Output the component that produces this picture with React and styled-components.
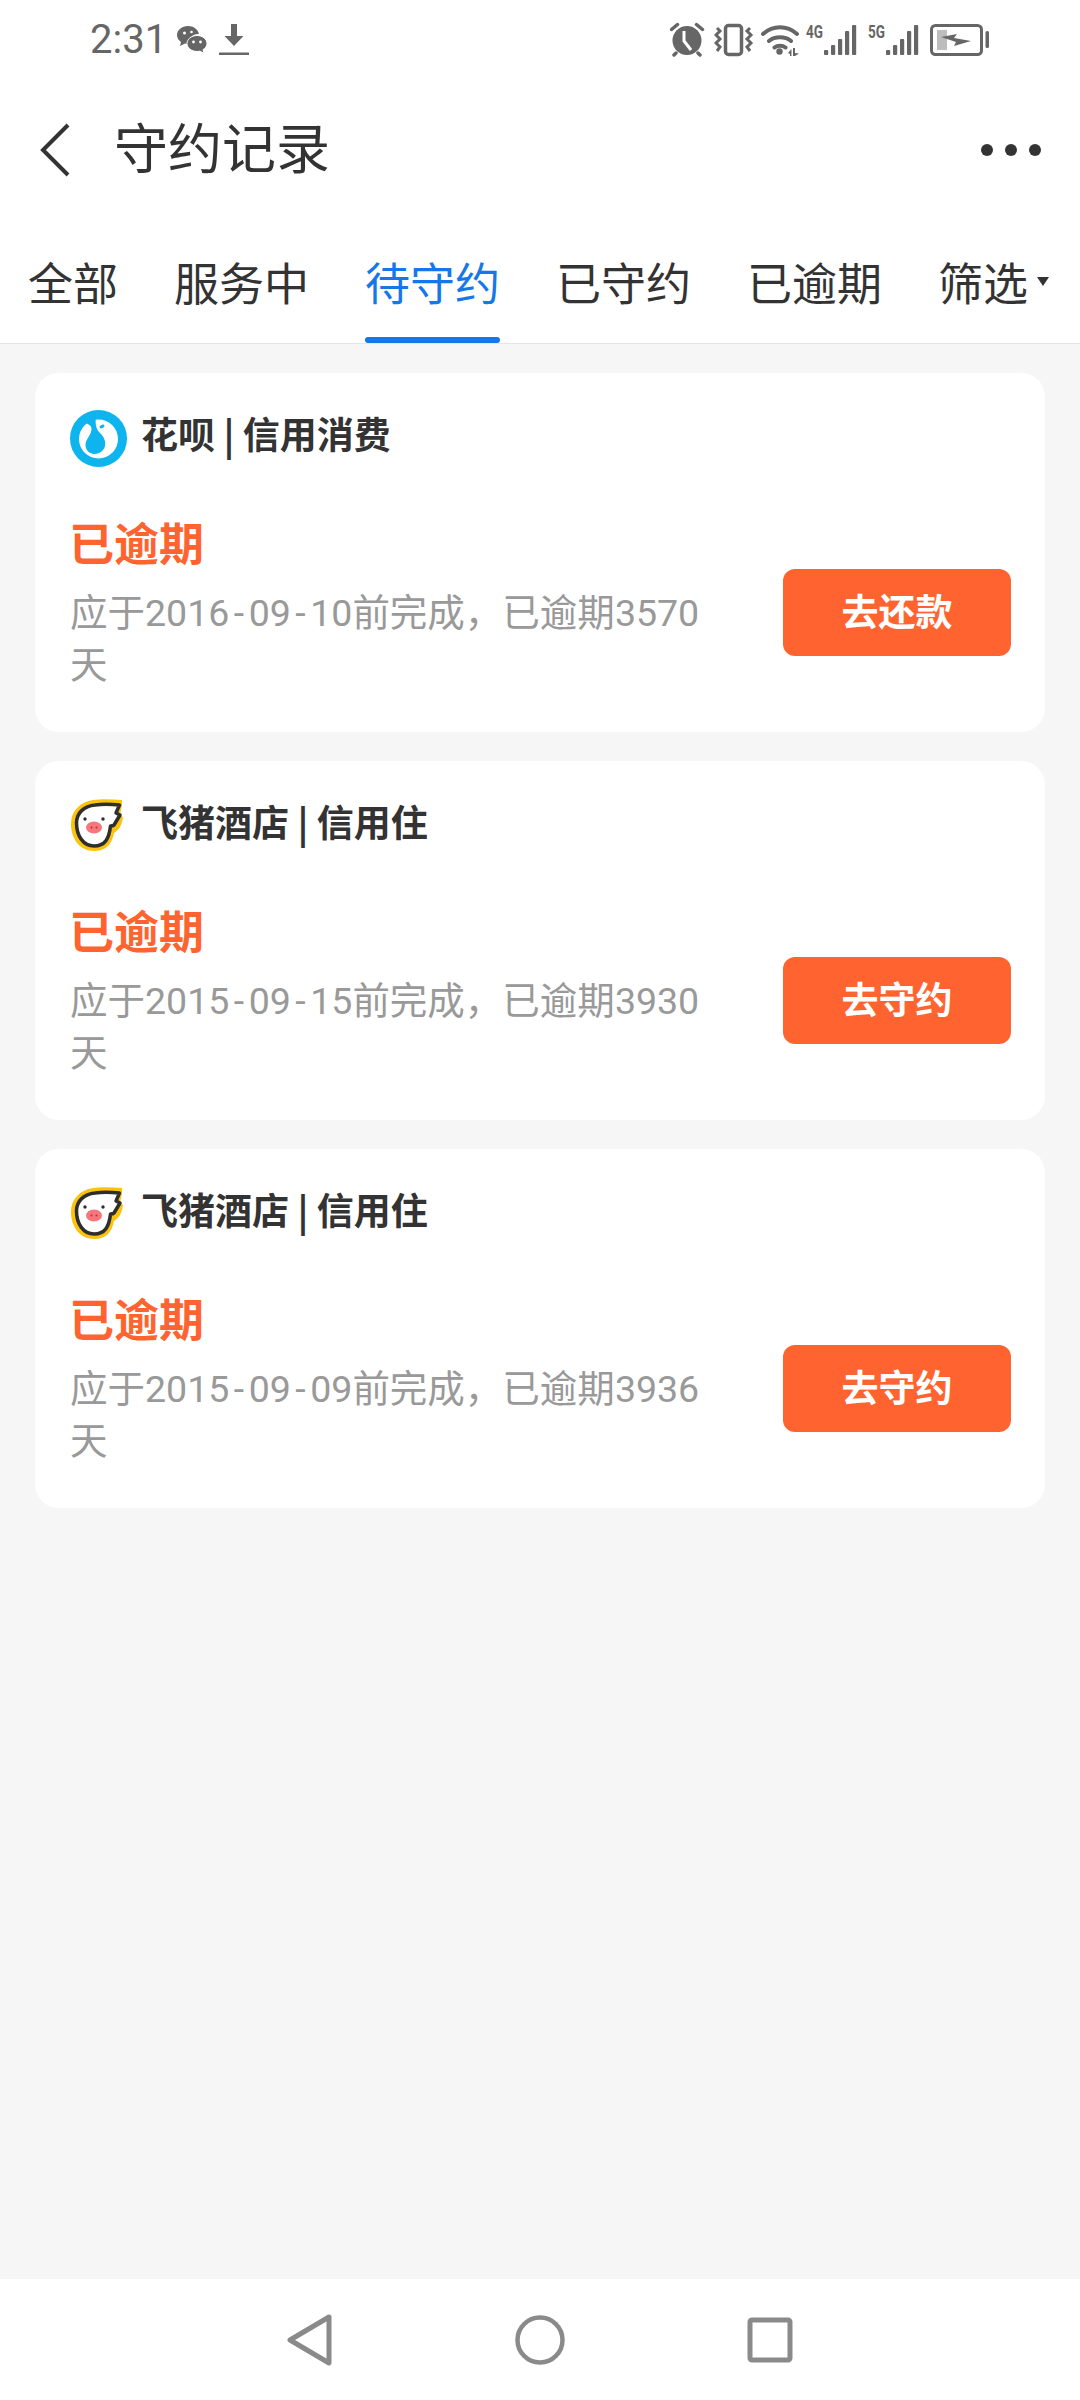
import styled, { createGlobalStyle } from "styled-components";

const GlobalStyle = createGlobalStyle`
  html, body {
    margin: 0;
    padding: 0;
    background: #ffffff;
  }
  * {
    box-sizing: border-box;
  }
`;

const records = [
  { logo: "huabei", name: "花呗 | 信用消费", date: "2016-09-10", days: 3570, action: "去还款" },
  { logo: "fliggy", name: "飞猪酒店 | 信用住", date: "2015-09-15", days: 3930, action: "去守约" },
  { logo: "fliggy", name: "飞猪酒店 | 信用住", date: "2015-09-09", days: 3936, action: "去守约" },
];

const tabs = ["全部", "服务中", "待守约", "已守约", "已逾期"];

function WechatIcon() {
  return (
    <svg width="30" height="28" viewBox="0 0 30 28">
      <path d="M11 0C5 0 0 4 0 9c0 3 1.500 5 4 7l-1 4 5-2.500c1 .3 2 .5 3 .5h1C11.500 12 16 7.500 22 8 21 3.500 16.500 0 11 0z" fill="#666" />
      <path d="M20 9.500c-5.500 0-10 3.700-10 8s4.500 8 10 8c1 0 2-.1 3-.4l4 2.400-1-3.800c2.500-1.500 4-3.700 4-6.200 0-4.300-4.500-8-10-8z" fill="#666" stroke="#fff" strokeWidth="1" />
      <circle cx="7.500" cy="7" r="1.500" fill="#fff" />
      <circle cx="14.500" cy="6" r="1.300" fill="#fff" />
      <circle cx="16.500" cy="16" r="1.400" fill="#fff" />
      <circle cx="23.500" cy="16" r="1.400" fill="#fff" />
    </svg>
  );
}

function DownloadIcon() {
  return (
    <svg width="30" height="32" viewBox="0 0 30 32">
      <path d="M12 0h6v12h6.500L15 22 5.500 12H12z" fill="#666" />
      <rect x="0" y="28.500" width="30" height="2.500" fill="#666" />
    </svg>
  );
}

function AlarmIcon() {
  return (
    <svg width="44" height="40" viewBox="0 0 44 40">
      <circle cx="17" cy="20.500" r="14.500" fill="#666" />
      <path d="M1.500 9.500l6-5M32.500 9.500l-6-5M6 33l-2 2M28 33l2 2" stroke="#666" strokeWidth="3.500" strokeLinecap="round" />
      <path d="M14 11v10l7 9" fill="none" stroke="#fff" strokeWidth="3" />
    </svg>
  );
}

function VibrateIcon() {
  return (
    <svg width="47" height="40" viewBox="0 0 47 40">
      <rect x="11.500" y="5.500" width="16" height="29" rx="3" fill="none" stroke="#666" strokeWidth="3.500" />
      <path d="M3 8l3 3-4 4 4 4-4 4 4 4-3 4M36 8l-3 3 4 4-4 4 4 4-4 4 3 4" fill="none" stroke="#666" strokeWidth="3" />
    </svg>
  );
}

function WifiIcon() {
  return (
    <svg width="45" height="40" viewBox="0 0 45 40">
      <path d="M2 14c10-9 24-9 34 0M8 21c6-5 16-5 22 0M13.500 27.500c3-2.500 8-2.500 11 0" fill="none" stroke="#666" strokeWidth="4" strokeLinecap="round" />
      <circle cx="18.500" cy="31.500" r="3.200" fill="#666" />
      <path d="M27 33l3.500-4v7H29v-2zM32 28h2v5l4 .5-4 2.500h-2z" fill="#666" />
    </svg>
  );
}

function SignalIcon({ label }) {
  const bars = [5, 10, 16, 24, 30];
  return (
    <svg width="62" height="40" viewBox="0 0 62 40">
      <text x="0" y="18" fontFamily="Roboto, sans-serif" fontSize="19" fontWeight="700" fill="#666" textLength="17" lengthAdjust="spacingAndGlyphs">
        {label}
      </text>
      {bars.map((h, i) => (
        <rect key={i} x={18 + i * 7} y={35 - h} width="4.200" height={h} rx="1" fill="#666" />
      ))}
    </svg>
  );
}

function BatteryIcon() {
  return (
    <svg width="60" height="40" viewBox="0 0 60 40">
      <rect x="1.500" y="5.500" width="50" height="29" rx="4" fill="none" stroke="#666" strokeWidth="3" />
      <rect x="7" y="10" width="10" height="20" fill="#bdbdbd" />
      <path d="M11 17l16-3-3 4 17 3-17 5 2-4z" fill="#666" />
      <rect x="55.500" y="11" width="3.500" height="17" rx="1.500" fill="#666" />
    </svg>
  );
}

function HuabeiLogo() {
  return (
    <svg width="57" height="57" viewBox="0 0 57 57">
      <circle cx="28.500" cy="28.500" r="28.500" fill="#0db4ed" />
      <circle cx="28.500" cy="29" r="19.500" fill="#fff" />
      <path d="M10 8l16-1c-1 7 0 12 4 16 4 4 6 8 5 13-1 5-6 8-10.500 8-5 0-9-4-9-9 0-6 6-10 6-16 0-4-4-6-11.500-7z" fill="#0db4ed" />
      <ellipse cx="32" cy="16.500" rx="2.600" ry="1.600" transform="rotate(-25 32 16.500)" fill="#0db4ed" />
    </svg>
  );
}

function FliggyLogo() {
  return (
    <svg width="57" height="57" viewBox="19 20 57 57">
      <path d="M71 22C60 21 50 21 42 22 29 24 20 33 20 46c0 16 10 27 23 27 12 0 18-7 20-18 5-3 8-8 9-16l-3-2 2-10z" fill="#fbc30d" />
      <path d="M68.500 27C60 26 50 26 44 27 33 28 25.500 35 25.500 45c0 13 7 23 17.500 23 11 0 15-7 16.500-20 2 0 3-.5 3.500-1l6-10-4-2z" fill="#fff" stroke="#2e2e2e" strokeWidth="3.500" strokeLinejoin="round" />
      <circle cx="34" cy="41" r="1.700" fill="#2e2e2e" />
      <circle cx="52" cy="41" r="1.700" fill="#2e2e2e" />
      <ellipse cx="43" cy="49.500" rx="8" ry="6" fill="#f7767b" />
      <circle cx="40.500" cy="49.500" r="1" fill="#a8353e" />
      <circle cx="45.500" cy="49.500" r="1" fill="#a8353e" />
    </svg>
  );
}

function RecordCard({ logo, name, date, days, action }) {
  const parts = date.split("-");
  return (
    <Card>
      <CardHeader>
        {logo === "huabei" ? <HuabeiLogo /> : <FliggyLogo />}
        <CardTitle>{name}</CardTitle>
      </CardHeader>
      <CardBody>
        <Info>
          <Status>已逾期</Status>
          <Description>
            应于{parts[0]}
            <Dash>-</Dash>
            {parts[1]}
            <Dash>-</Dash>
            {parts[2]}前完成，已逾期{days}天
          </Description>
        </Info>
        <ActionButton>{action}</ActionButton>
      </CardBody>
    </Card>
  );
}

export default function App() {
  return (
    <>
      <GlobalStyle />
      <Page>
        <StatusBar>
          <Time>2:31</Time>
          <StatusLeft>
            <WechatIcon />
            <DownloadIcon />
          </StatusLeft>
          <StatusRight>
            <AlarmIcon />
            <VibrateIcon />
            <WifiIcon />
            <SignalIcon label="4G" />
            <SignalIcon label="5G" />
            <BatteryIcon />
          </StatusRight>
        </StatusBar>
        <NavBar>
          <svg width="34" height="54" viewBox="0 0 34 54">
            <path d="M30 2L5 27l25 25" fill="none" stroke="#333" strokeWidth="4" />
          </svg>
          <Title>守约记录</Title>
          <Dots>
            <Dot />
            <Dot />
            <Dot />
          </Dots>
        </NavBar>
        <TabBar>
          {tabs.map((t) => (
            <Tab key={t} $active={t === "待守约"}>
              {t}
            </Tab>
          ))}
          <Filter>
            筛选
            <Caret />
          </Filter>
        </TabBar>
        <Content>
          {records.map((r) => (
            <RecordCard key={r.date} {...r} />
          ))}
        </Content>
        <BottomBar>
          <svg width="60" height="52" viewBox="0 0 60 52">
            <path d="M49 3L10 26l39 23z" fill="none" stroke="#8a8a8a" strokeWidth="5" strokeLinejoin="round" />
          </svg>
          <svg width="60" height="52" viewBox="0 0 60 52">
            <circle cx="30" cy="26" r="22.500" fill="none" stroke="#8a8a8a" strokeWidth="4.500" />
          </svg>
          <svg width="60" height="52" viewBox="0 0 60 52">
            <rect x="10" y="6" width="40" height="40" rx="2" fill="none" stroke="#8a8a8a" strokeWidth="5" />
          </svg>
        </BottomBar>
      </Page>
    </>
  );
}

const Page = styled.div`
  width: 1080px;
  height: 2400px;
  display: flex;
  flex-direction: column;
  background: #ffffff;
  font-family: "Noto Sans CJK SC", sans-serif;
`;

const StatusBar = styled.div`
  height: 80px;
  flex-shrink: 0;
  display: flex;
  align-items: center;
  padding: 0 90px;
  color: #666666;
  svg {
    display: block;
    flex-shrink: 0;
  }
`;

const Time = styled.div`
  font-family: Roboto, sans-serif;
  font-size: 40px;
  line-height: 48px;
  width: 87px;
`;

const StatusLeft = styled.div`
  display: flex;
  align-items: center;
  gap: 12px;
`;

const StatusRight = styled.div`
  display: flex;
  align-items: center;
  margin-left: auto;
`;

const NavBar = styled.div`
  height: 140px;
  flex-shrink: 0;
  display: flex;
  align-items: center;
  padding: 0 39px 0 38px;
`;

const Title = styled.div`
  font-size: 54px;
  line-height: 70px;
  color: #333333;
  margin: 0 0 8px 42px;
`;

const Dots = styled.div`
  display: flex;
  gap: 12px;
  margin-left: auto;
`;

const Dot = styled.span`
  width: 12px;
  height: 12px;
  border-radius: 50%;
  background: #333333;
`;

const TabBar = styled.div`
  height: 124px;
  flex-shrink: 0;
  display: flex;
  gap: 56px;
  padding-left: 28px;
  border-bottom: 1px solid #e6e6e6;
`;

const Tab = styled.div`
  position: relative;
  display: flex;
  align-items: center;
  font-size: 45px;
  color: ${(p) => (p.$active ? "#1677e8" : "#333333")};
  &::after {
    content: "";
    display: ${(p) => (p.$active ? "block" : "none")};
    position: absolute;
    left: 0;
    right: 0;
    bottom: 0;
    height: 6px;
    border-radius: 3px;
    background: #1677e8;
  }
`;

const Filter = styled(Tab)`
  gap: 9px;
`;

const Caret = styled.span`
  width: 0;
  height: 0;
  border-left: 6px solid transparent;
  border-right: 6px solid transparent;
  border-top: 9px solid #333333;
`;

const Content = styled.div`
  flex: 1;
  display: flex;
  flex-direction: column;
  gap: 29px;
  padding: 29px 35px 0;
  background: #f6f6f6;
`;

const Card = styled.div`
  height: 359px;
  border-radius: 24px;
  background: #ffffff;
  padding: 37px 34px 0 35px;
`;

const CardHeader = styled.div`
  display: flex;
  align-items: center;
  gap: 14px;
  svg {
    display: block;
  }
`;

const CardTitle = styled.div`
  font-size: 37px;
  font-weight: 700;
  line-height: 44px;
  color: #333333;
  margin-bottom: 12px;
`;

const CardBody = styled.div`
  display: flex;
  justify-content: space-between;
  align-items: flex-start;
  margin-top: 45px;
`;

const Info = styled.div`
  width: 640px;
`;

const Status = styled.div`
  font-size: 45px;
  font-weight: 700;
  line-height: 60px;
  color: #ff6430;
  margin-left: -1px;
`;

const Description = styled.div`
  margin-top: 15px;
  font-family: Roboto, "Noto Sans CJK SC", sans-serif;
  font-size: 37.5px;
  line-height: 52px;
  color: #999999;
`;

const Dash = styled.span`
  margin: 0 4.5px;
`;

const ActionButton = styled.button`
  width: 228px;
  height: 87px;
  margin-top: 57px;
  padding: 0 0 5px;
  border: none;
  border-radius: 12px;
  background: #ff6430;
  color: #ffffff;
  font-family: inherit;
  font-size: 37px;
  font-weight: 700;
`;

const BottomBar = styled.div`
  height: 121px;
  flex-shrink: 0;
  display: flex;
  justify-content: center;
  align-items: center;
  gap: 170px;
  background: #ffffff;
`;
